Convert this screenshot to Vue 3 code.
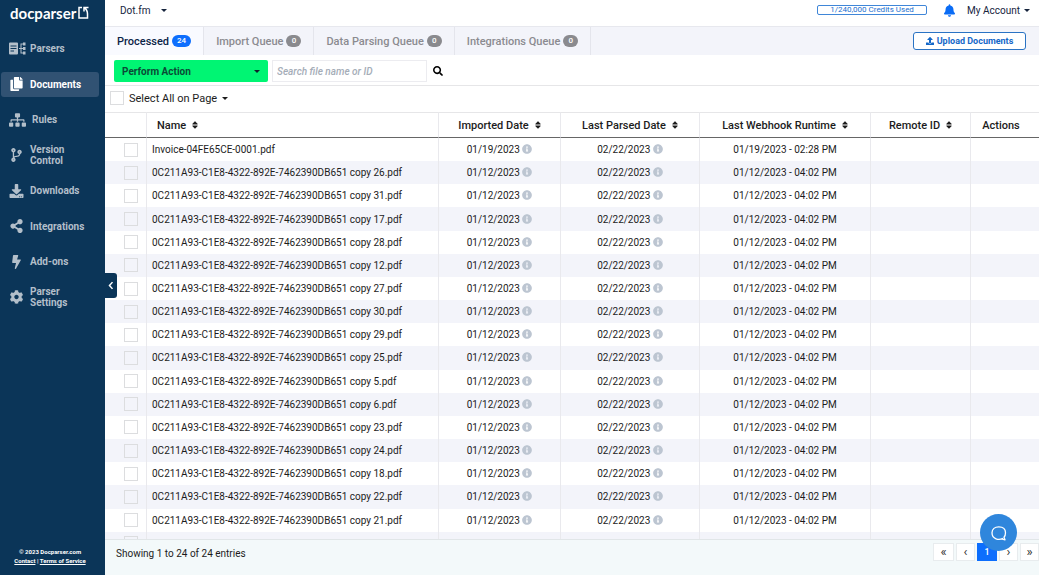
<script setup>
import { ref } from 'vue'

const icons = {
  copy: { box: '0 0 448 512', d: 'M320 448v40c0 13.255-10.745 24-24 24H24c-13.255 0-24-10.745-24-24V120c0-13.255 10.745-24 24-24h72v296c0 30.879 25.121 56 56 56h168zm0-344V0H152c-13.255 0-24 10.745-24 24v368c0 13.255 10.745 24 24 24h272c13.255 0 24-10.745 24-24V128H344c-13.2 0-24-10.8-24-24zm120.971-31.029L375.029 7.029A24 24 0 0 0 358.059 0H352v96h96v-6.059a24 24 0 0 0-7.029-16.97z' },
  parsers: { box: '0 0 34 26', d: 'M2 1h14a2 2 0 0 1 2 2v20a2 2 0 0 1-2 2H2a2 2 0 0 1-2-2V3a2 2 0 0 1 2-2zm1 6v2h12V7zm0 5v2h12v-2zm0 5v2h7v-2zM20 12h3V3h5V1h5v6h-5V5h-3v7h3v-2h5v6h-5v-2h-3v7h3v-2h5v6h-5v-2h-5v-9h-3z' },
  sitemap: { box: '0 0 640 512', d: 'M128 352H32c-17.67 0-32 14.33-32 32v96c0 17.67 14.33 32 32 32h96c17.67 0 32-14.33 32-32v-96c0-17.67-14.33-32-32-32zm-24-80h192v48h48v-48h192v48h48v-57.59c0-21.17-17.23-38.41-38.41-38.41H344v-64h40c17.67 0 32-14.33 32-32V32c0-17.67-14.33-32-32-32H256c-17.67 0-32 14.33-32 32v96c0 17.67 14.33 32 32 32h40v64H94.41C73.23 224 56 241.23 56 262.41V320h48v-48zm264 80h-96c-17.67 0-32 14.33-32 32v96c0 17.67 14.33 32 32 32h96c17.67 0 32-14.33 32-32v-96c0-17.67-14.33-32-32-32zm240 0h-96c-17.67 0-32 14.33-32 32v96c0 17.67 14.33 32 32 32h96c17.67 0 32-14.33 32-32v-96c0-17.67-14.33-32-32-32z' },
  branch: { box: '0 0 384 512', d: 'M384 144c0-44.2-35.8-80-80-80s-80 35.8-80 80c0 36.4 24.3 67.1 57.5 76.8-.6 16.1-4.2 28.5-11 36.9-15.4 19.2-49.3 22.4-85.2 25.7-28.2 2.6-57.4 5.4-81.3 16.9v-144c32.5-10.2 56-40.5 56-76.3 0-44.2-35.8-80-80-80S0 35.8 0 80c0 35.8 23.5 66.1 56 76.3v199.3C23.5 365.9 0 396.2 0 432c0 44.2 35.8 80 80 80s80-35.8 80-80c0-34-21.2-63.1-51.2-74.6 3.1-5.2 7.8-9.8 14.9-13.4 16.2-8.2 40.4-10.4 66.1-12.8 42.2-3.9 90-8.4 118.2-43.4 14-17.4 21.1-39.8 21.6-67.9 31.6-10.8 54.4-40.7 54.4-75.9zM80 64c8.8 0 16 7.2 16 16s-7.2 16-16 16-16-7.2-16-16 7.2-16 16-16zm0 384c-8.8 0-16-7.2-16-16s7.2-16 16-16 16 7.2 16 16-7.2 16-16 16zm224-320c8.8 0 16 7.2 16 16s-7.2 16-16 16-16-7.2-16-16 7.2-16 16-16z' },
  download: { box: '0 0 512 512', d: 'M216 0h80c13.3 0 24 10.7 24 24v168h87.7c17.8 0 26.7 21.5 14.1 34.1L269.7 378.3c-7.5 7.5-19.8 7.5-27.3 0L90.1 226.1c-12.6-12.6-3.7-34.1 14.1-34.1H192V24c0-13.3 10.7-24 24-24zm296 376v112c0 13.3-10.7 24-24 24H24c-13.3 0-24-10.7-24-24V376c0-13.3 10.7-24 24-24h146.7l49 49c20.1 20.1 52.5 20.1 72.6 0l49-49H488c13.3 0 24 10.7 24 24zm-124 88c0-11-9-20-20-20s-20 9-20 20 9 20 20 20 20-9 20-20zm64 0c0-11-9-20-20-20s-20 9-20 20 9 20 20 20 20-9 20-20z' },
  share: { box: '0 0 448 512', d: 'M352 320c-22.608 0-43.387 7.819-59.79 20.895l-102.486-64.054a96.551 96.551 0 0 0 0-41.683l102.486-64.054C308.613 184.181 329.392 192 352 192c53.019 0 96-42.981 96-96S405.019 0 352 0s-96 42.981-96 96c0 7.158.79 14.13 2.276 20.841L155.79 180.895C139.387 167.819 118.608 160 96 160c-53.019 0-96 42.981-96 96s42.981 96 96 96c22.608 0 43.387-7.819 59.79-20.895l102.486 64.054A96.301 96.301 0 0 0 256 416c0 53.019 42.981 96 96 96s96-42.981 96-96-42.981-96-96-96z' },
  bolt: { box: '0 0 320 512', d: 'M296 160H180.6l42.6-129.8C227.2 15 215.7 0 200 0H56C44 0 33.8 8.9 32.2 20.8l-32 240C-1.7 275.2 9.5 288 24 288h118.7L96.6 482.5c-3.6 15.2 8 29.5 23.3 29.5 8.4 0 16.4-4.4 20.8-12l176-304c9.3-15.9-2.2-36-20.7-36z' },
  cog: { box: '0 0 512 512', d: 'M487.4 315.7l-42.6-24.6c4.3-23.2 4.3-47 0-70.2l42.6-24.6c4.9-2.8 7.1-8.6 5.5-14-11.1-35.6-30-67.8-54.7-94.6-3.8-4.1-10-5.1-14.8-2.3L380.8 110c-17.9-15.4-38.5-27.3-60.8-35.1V25.8c0-5.6-3.9-10.5-9.4-11.7-36.7-8.2-74.3-7.8-109.2 0-5.5 1.2-9.4 6.1-9.4 11.7V75c-22.2 7.9-42.8 19.8-60.8 35.1L88.7 85.5c-4.9-2.8-11-1.9-14.8 2.3-24.7 26.7-43.6 58.9-54.7 94.6-1.7 5.4.6 11.2 5.5 14L67.3 221c-4.3 23.2-4.3 47 0 70.2l-42.6 24.6c-4.9 2.8-7.1 8.6-5.5 14 11.1 35.6 30 67.8 54.7 94.6 3.8 4.1 10 5.1 14.8 2.3l42.6-24.6c17.9 15.4 38.5 27.3 60.8 35.1v49.2c0 5.6 3.9 10.5 9.4 11.7 36.7 8.2 74.3 7.8 109.2 0 5.5-1.2 9.4-6.1 9.4-11.7v-49.2c22.2-7.9 42.8-19.8 60.8-35.1l42.6 24.6c4.9 2.8 11 1.9 14.8-2.3 24.7-26.7 43.6-58.9 54.7-94.6 1.5-5.5-.7-11.3-5.6-14.1zM256 336c-44.1 0-80-35.9-80-80s35.9-80 80-80 80 35.9 80 80-35.9 80-80 80z' }
}

const nav = [
  { label: 'Parsers', icon: 'parsers' },
  { label: 'Documents', icon: 'copy', active: true },
  { label: 'Rules', icon: 'sitemap' },
  { label: 'Version Control', icon: 'branch' },
  { label: 'Downloads', icon: 'download' },
  { label: 'Integrations', icon: 'share' },
  { label: 'Add-ons', icon: 'bolt' },
  { label: 'Parser Settings', icon: 'cog' }
]

const tabs = [
  { label: 'Processed', count: 24, active: true },
  { label: 'Import Queue', count: 0 },
  { label: 'Data Parsing Queue', count: 0 },
  { label: 'Integrations Queue', count: 0 }
]

const columns = [
  { label: 'Name', cls: 'name' },
  { label: 'Imported Date', cls: 'imported' },
  { label: 'Last Parsed Date', cls: 'parsed' },
  { label: 'Last Webhook Runtime', cls: 'webhook' },
  { label: 'Remote ID', cls: 'remote' }
]

const copies = [26, 31, 17, 28, 12, 27, 30, 29, 25, 5, 6, 23, 24, 18, 22, 21]
const rows = [
  { name: 'Invoice-04FE65CE-0001.pdf', imported: '01/19/2023', parsed: '02/22/2023', webhook: '01/19/2023 - 02:28 PM' },
  ...copies.map((n) => ({
    name: `0C211A93-C1E8-4322-892E-7462390DB651 copy ${n}.pdf`,
    imported: '01/12/2023',
    parsed: '02/22/2023',
    webhook: '01/12/2023 - 04:02 PM'
  }))
]

const query = ref('')
</script>

<template>
  <div class="app">
    <aside class="sidebar">
      <a class="logo" href="#">
        <span>docparser</span>
        <svg viewBox="0 0 22 26" fill="none" stroke="currentColor" stroke-width="3"><path d="M8 3H2v21h17v-9M21 3h-9v8M12 3c5 3 7 7 7 13" /></svg>
      </a>
      <nav class="nav">
        <a v-for="item in nav" :key="item.label" href="#" :class="['nav-item', item.icon, { active: item.active }]">
          <svg :viewBox="icons[item.icon].box" fill="currentColor" fill-rule="evenodd"><path :d="icons[item.icon].d" /></svg>
          <span>{{ item.label }}</span>
        </a>
      </nav>
      <div class="legal">
        <div>© 2023 Docparser.com</div>
        <div><a href="#">Contact</a> | <a href="#">Terms of Service</a></div>
      </div>
      <button class="collapse" type="button" aria-label="Collapse sidebar">
        <svg viewBox="0 0 8 12" fill="none" stroke="currentColor" stroke-width="2"><path d="M6 1.500L2 6l4 4.500" /></svg>
      </button>
    </aside>

    <main class="main">
      <header class="topbar">
        <div class="picker parser-picker">
          <select aria-label="Parser"><option>Dot.fm</option></select>
          <i class="caret"></i>
        </div>
        <div class="account">
          <div class="credits">1/240,000 Credits Used</div>
          <button class="bell" type="button" aria-label="Notifications">
            <svg viewBox="0 0 448 512" fill="currentColor"><path d="M224 512c35.32 0 63.97-28.65 63.97-64H160.03c0 35.35 28.65 64 63.97 64zm215.39-149.71c-19.32-20.76-55.47-51.99-55.47-154.29 0-77.7-54.48-139.9-127.94-155.16V32c0-17.67-14.32-32-31.98-32s-31.98 14.33-31.98 32v20.84C118.56 68.1 64.08 130.3 64.08 208c0 102.3-36.15 133.53-55.47 154.29-6 6.45-8.66 14.16-8.61 21.71.11 16.4 12.98 32 32.1 32h383.8c19.12 0 32-15.6 32.1-32 .05-7.55-2.61-15.27-8.61-21.71z" /></svg>
          </button>
          <button class="menu" type="button">My Account <i class="caret"></i></button>
        </div>
      </header>

      <div class="tabbar">
        <div class="tabs" role="tablist">
          <button v-for="tab in tabs" :key="tab.label" type="button" role="tab" :aria-selected="!!tab.active" :class="['tab', { active: tab.active }]">
            {{ tab.label }}<span class="badge">{{ tab.count }}</span>
          </button>
        </div>
        <button class="upload" type="button">
          <svg viewBox="0 0 512 512" fill="currentColor"><path d="M296 384h-80c-13.300 0-24-10.700-24-24V192h-87.700c-17.800 0-26.700-21.500-14.100-34.100L242.300 5.700c7.500-7.500 19.800-7.500 27.300 0l152.200 152.200c12.600 12.600 3.700 34.100-14.100 34.100H320v168c0 13.300-10.700 24-24 24zm216-8v112c0 13.300-10.700 24-24 24H24c-13.300 0-24-10.700-24-24V376c0-13.300 10.700-24 24-24h136v8c0 30.900 25.100 56 56 56h80c30.900 0 56-25.100 56-56v-8h136c13.300 0 24 10.700 24 24z" /></svg>
          Upload Documents
        </button>
      </div>

      <div class="toolbar">
        <div class="picker action-picker">
          <select aria-label="Perform action"><option>Perform Action</option></select>
          <i class="caret"></i>
        </div>
        <input v-model="query" class="search" type="text" aria-label="Search file name or ID" placeholder="Search file name or ID" />
        <button class="search-button" type="button" aria-label="Search">
          <svg viewBox="0 0 512 512" fill="currentColor"><path d="M505 442.700L405.300 343c-4.500-4.500-10.600-7-17-7H372c27.600-35.300 44-79.700 44-128C416 93.100 322.900 0 208 0S0 93.100 0 208s93.100 208 208 208c48.300 0 92.700-16.400 128-44v16.300c0 6.400 2.500 12.500 7 17l99.700 99.700c9.400 9.400 24.600 9.400 33.900 0l28.300-28.300c9.400-9.400 9.400-24.600.1-34zM208 336c-70.700 0-128-57.200-128-128 0-70.700 57.200-128 128-128 70.700 0 128 57.200 128 128 0 70.700-57.200 128-128 128z" /></svg>
        </button>
      </div>

      <div class="selectbar">
        <input id="select-all" type="checkbox" />
        <label for="select-all">Select All on Page</label>
        <button type="button" aria-label="Selection options"><i class="caret"></i></button>
      </div>

      <div class="table-wrap">
        <table>
          <thead>
            <tr>
              <th class="check"></th>
              <th v-for="col in columns" :key="col.label" :class="col.cls">
                <button type="button">
                  {{ col.label }}
                  <svg viewBox="0 40 320 432" fill="currentColor"><path d="M41 288h238c21.400 0 32.100 25.900 17 41L177 448c-9.400 9.400-24.600 9.400-33.900 0L24 329c-15.100-15.100-4.400-41 17-41zm255-105L177 64c-9.400-9.400-24.600-9.400-33.900 0L24 183c-15.100 15.100-4.400 41 17 41h238c21.400 0 32.100-25.900 17-41z" /></svg>
                </button>
              </th>
              <th class="actions">Actions</th>
            </tr>
          </thead>
          <tbody>
            <tr v-for="row in rows" :key="row.name">
              <td class="check"><input type="checkbox" :aria-label="'Select ' + row.name" /></td>
              <td class="name">{{ row.name }}</td>
              <td v-for="key in ['imported', 'parsed']" :key="key">
                {{ row[key] }}
                <svg class="info" viewBox="0 0 512 512" fill="currentColor"><path d="M256 8C119.043 8 8 119.083 8 256c0 136.997 111.043 248 248 248s248-111.003 248-248C504 119.083 392.957 8 256 8zm0 110c23.196 0 42 18.804 42 42s-18.804 42-42 42-42-18.804-42-42 18.804-42 42-42zm56 254c0 6.627-5.373 12-12 12h-88c-6.627 0-12-5.373-12-12v-24c0-6.627 5.373-12 12-12h12v-64h-12c-6.627 0-12-5.373-12-12v-24c0-6.627 5.373-12 12-12h64c6.627 0 12 5.373 12 12v100h12c6.627 0 12 5.373 12 12v24z" /></svg>
              </td>
              <td>{{ row.webhook }}</td>
              <td></td>
              <td></td>
            </tr>
            <tr>
              <td class="check"><input type="checkbox" aria-label="Select next document" /></td>
              <td v-for="n in 6" :key="n"></td>
            </tr>
          </tbody>
        </table>
      </div>

      <footer class="footer">
        <span>Showing 1 to 24 of 24 entries</span>
        <div class="pages">
          <button type="button" aria-label="First page">«</button>
          <button type="button" aria-label="Previous page">‹</button>
          <button type="button" class="current">1</button>
          <button type="button" aria-label="Next page">›</button>
          <button type="button" aria-label="Last page">»</button>
        </div>
      </footer>
    </main>

    <button class="chat" type="button" aria-label="Open chat">
      <svg viewBox="0 0 18 18" fill="none" stroke="currentColor" stroke-width="1.300" stroke-linecap="round" stroke-linejoin="round"><path d="M12.500 14.500C10.500 15.500 8 15.500 6 14.800C3.200 13.800 2 11.500 2 8.800C2 5 4.800 2.800 8.800 2.800S15.500 5 15.500 8.800C15.500 10.800 15 12.200 14 13.300L15 15.800L11.500 14.900" /></svg>
    </button>
  </div>
</template>

<style>
body {
  margin: 0;
  background: #fff;
}
</style>

<style scoped>
.app {
  display: flex;
  box-sizing: border-box;
  height: 100vh;
  padding: 0 2px 3px 0;
  font-family: Roboto, "Liberation Sans", sans-serif;
  font-size: 10px;
  color: #1c1c1c;
}
.app * {
  box-sizing: border-box;
}
button, select, input {
  margin: 0;
  padding: 0;
  border: 0;
  background: none;
  font: inherit;
  color: inherit;
}
a {
  color: inherit;
}
svg {
  display: block;
  flex: none;
}
.caret {
  flex: none;
  border: 3px solid transparent;
  border-top-color: currentColor;
  border-bottom: 0;
}

/* Sidebar */
.sidebar {
  position: relative;
  display: flex;
  flex-direction: column;
  flex: none;
  width: 105px;
  background: #0b3558;
  color: #b3bfca;
}
.logo {
  display: flex;
  align-items: center;
  gap: 2px;
  height: 31px;
  padding: 0 0 6px 10px;
  color: #fff;
  font: 700 15px/20px Lato, sans-serif;
  text-decoration: none;
}
.logo svg {
  width: 11px;
  height: 13px;
}
.nav {
  display: grid;
  grid-auto-rows: 1fr;
  align-items: center;
  height: 284px;
  padding: 0 6px 0 1px;
}
.nav-item {
  display: flex;
  align-items: center;
  gap: 6px;
  min-height: 25px;
  padding-left: 8px;
  border-radius: 3px;
  font-size: 10px;
  font-weight: 700;
  line-height: 11px;
  text-decoration: none;
}
.nav-item svg {
  width: 15px;
  height: 14px;
}
.nav-item.parsers svg {
  width: 17px;
  height: 13px;
  margin-right: -2px;
}
.nav-item.sitemap svg {
  width: 17px;
}
.nav-item span {
  max-width: 60px;
}
.nav-item.active {
  background: #315273;
  color: #fff;
}
.legal {
  margin-top: auto;
  padding-bottom: 10px;
  padding-right: 5px;
  color: #fff;
  font-size: 6px;
  font-weight: 700;
  line-height: 9px;
  text-align: center;
}
.collapse {
  position: absolute;
  top: 273px;
  left: 100%;
  z-index: 2;
  display: grid;
  place-items: center;
  width: 12px;
  height: 25px;
  border-radius: 0 3px 3px 0;
  background: #0b3558;
  color: #fff;
}
.collapse svg {
  width: 6px;
  height: 9px;
}

/* Top bar */
.main {
  display: flex;
  flex-direction: column;
  flex: 1;
  min-width: 0;
}
.topbar {
  display: flex;
  justify-content: space-between;
  height: 26px;
  color: #16243d;
}
.picker {
  position: relative;
  display: flex;
  align-items: center;
}
.picker select {
  appearance: none;
  width: 100%;
  height: 100%;
}
.picker .caret {
  position: absolute;
  right: 8px;
  pointer-events: none;
}
.parser-picker {
  width: 70px;
  height: 20px;
  padding-left: 15px;
}
.account {
  display: flex;
  align-items: center;
  height: 20px;
  padding-right: 9px;
}
.credits {
  width: 110px;
  height: 10px;
  border: 1px solid #3f86d8;
  border-radius: 2px;
  color: #1a6fd0;
  font-size: 8px;
  line-height: 8px;
  text-align: center;
}
.bell {
  margin: 0 12px 0 17px;
  color: #0a6cf5;
}
.bell svg {
  width: 11px;
  height: 13px;
}
.menu {
  display: flex;
  align-items: center;
  gap: 4px;
}

/* Tabs */
.tabbar {
  display: flex;
  align-items: center;
  justify-content: space-between;
  height: 29px;
  padding-right: 13px;
  border-top: 1px solid #e7e8ee;
  background: #f3f4fa;
}
.tabs {
  display: flex;
  align-self: stretch;
}
.tab {
  display: flex;
  align-items: center;
  gap: 3px;
  padding: 0 12px;
  border-right: 1px solid #e4e5ec;
  color: #8b8b90;
  font-size: 11px;
  font-weight: 500;
}
.tab.active {
  background: #f9faff;
  color: #0b2447;
}
.badge {
  min-width: 15px;
  padding: 0 5px;
  border-radius: 6px;
  background: #8a8a8e;
  color: #fff;
  font-size: 8px;
  line-height: 12px;
}
.tab.active .badge {
  background: #0d6efd;
}
.upload {
  display: flex;
  align-items: center;
  justify-content: center;
  gap: 3px;
  width: 113px;
  height: 18px;
  border: 1px solid #2a73c4;
  border-radius: 3px;
  background: #fff;
  color: #1467c8;
  font-size: 9px;
  font-weight: 700;
}
.upload svg {
  width: 8px;
  height: 8px;
}

/* Toolbar */
.toolbar {
  display: flex;
  align-items: center;
  height: 31px;
  padding: 2px 0 0 9px;
  border-bottom: 1px solid #e6e6e8;
}
.action-picker {
  width: 154px;
  height: 22px;
  border-radius: 2px;
  background: #00f573;
  color: #0b4a36;
  font-weight: 700;
}
.action-picker select {
  padding-left: 8px;
}
.action-picker .caret {
  color: #10202a;
}
.search {
  width: 155px;
  height: 22px;
  margin-left: 4px;
  padding: 0 4px;
  border: 1px solid #ececf0;
  font-size: 10px;
  font-style: italic;
  font-weight: 500;
}
.search::placeholder {
  color: #a5adb8;
  opacity: 1;
}
.search-button {
  margin-left: 6px;
  color: #000;
}
.search-button svg {
  width: 10px;
  height: 10px;
}
.selectbar {
  display: flex;
  align-items: center;
  gap: 5px;
  height: 26px;
  padding: 0 0 2px 5px;
  font-size: 11px;
}
.selectbar button {
  display: flex;
}
input[type="checkbox"] {
  appearance: none;
  display: block;
  width: 14px;
  height: 14px;
  border: 1px solid #dcdddf;
}

/* Table */
.table-wrap {
  flex: 1;
  min-height: 0;
  overflow: hidden;
}
table {
  width: 100%;
  height: 443px;
  border-collapse: separate;
  border-spacing: 0;
  table-layout: fixed;
}
th, td {
  padding: 0;
  border-right: 1px solid #e9e9ed;
  text-align: center;
  white-space: nowrap;
}
th:last-child, td:last-child {
  border-right: 0;
}
th {
  height: 26px;
  border-top: 1px solid #e6e6e8;
  border-bottom: 1px solid #666;
  font-size: 11px;
  font-weight: 500;
}
th button {
  display: inline-flex;
  align-items: center;
  gap: 6px;
}
th svg {
  width: 6px;
  height: 8px;
}
td {
  height: 23px;
  font-size: 10px;
}
tbody tr:nth-child(even) {
  background: #f3f4fa;
}
.check {
  width: 42px;
}
.check input {
  margin-left: 19px;
}
th.name {
  padding-left: 10px;
  text-align: left;
}
td.name {
  padding-left: 5px;
  text-align: left;
}
.imported {
  width: 122px;
}
.parsed {
  width: 139px;
}
.webhook {
  width: 171px;
}
.remote {
  width: 100px;
}
.actions {
  width: 68px;
  padding-right: 8px;
}
.info {
  display: inline-block;
  width: 10px;
  height: 10px;
  color: #bcc5d1;
  vertical-align: -1px;
}

/* Footer */
.footer {
  display: flex;
  align-items: flex-start;
  justify-content: space-between;
  height: 36px;
  padding: 3px 0 0 11px;
  border-top: 1px solid #e1e6e8;
  background: #f3f9fa;
}
.footer > span {
  line-height: 22px;
}
.pages {
  display: grid;
  grid-template-columns: 21px 19px 20px 19px 19px;
  gap: 2px;
}
.pages button {
  height: 18px;
  border: 1px solid #e8ecee;
  background: #fff;
  color: #333;
  font-size: 13px;
  line-height: 14px;
}
.pages .current {
  border-color: #0d6efd;
  background: #0d6efd;
  color: #fff;
  font-size: 9px;
  font-weight: 500;
}
.chat {
  position: fixed;
  right: 24px;
  bottom: 27px;
  display: grid;
  place-items: center;
  width: 37px;
  height: 37px;
  border-radius: 50%;
  background: #2f86dc;
  color: #fff;
}
.chat svg {
  width: 18px;
  height: 18px;
}
</style>
